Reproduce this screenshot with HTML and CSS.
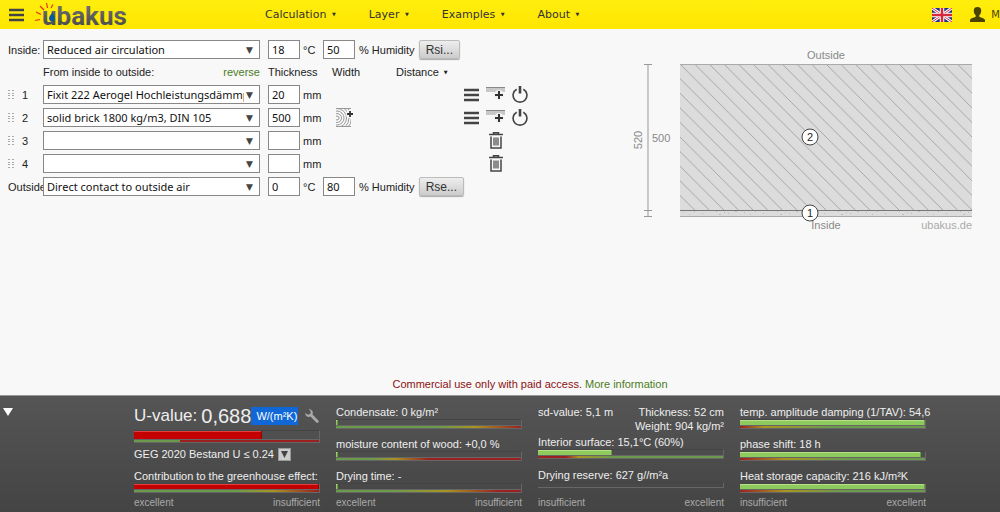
FILE: index.html
```html
<!DOCTYPE html>
<html lang="en">
<head>
<meta charset="utf-8">
<title>ubakus</title>
<link rel="stylesheet" href="styles.css">
</head>
<body>
<svg width="0" height="0" class="sprite" aria-hidden="true">
  <symbol id="grip" viewBox="0 0 6 9"><path fill="#aaa" d="M0 0h2v1H0zM4 0h2v1H4zM0 3h2v1H0zM4 3h2v1H4zM0 5h2v1H0zM4 5h2v1H4zM0 8h2v1H0zM4 8h2v1H4z"/></symbol>
  <symbol id="bars" viewBox="0 0 15 14"><path stroke="#444" stroke-width="2.400" d="M0 2h15M0 7h15M0 12h15"/></symbol>
  <symbol id="insert" viewBox="0 0 19 16"><path fill="#c8c8c8" d="M0 1h19v4H0z"/><path fill="#888" d="M0 0h19v1H0z"/><circle cx="13" cy="8" r="5" fill="#f2f2f2"/><path stroke="#333" stroke-width="2" d="M9 8h8M13 4v8"/></symbol>
  <symbol id="power" viewBox="0 0 16 17"><path fill="none" stroke="#444" stroke-width="1.600" d="M4.700 3.200A6.900 6.900 0 1 0 11.300 3.200"/><path stroke="#444" stroke-width="2.600" d="M8 0v7.500"/></symbol>
  <symbol id="trash" viewBox="0 0 14 17"><path fill="none" stroke="#444" stroke-width="1.500" d="M0 2.600h14M4.500 2V.8h5V2M2 4.500v11.500h10V4.500"/><path stroke="#444" stroke-width="1.200" d="M5 5.500v8M7 5.500v8M9 5.500v8"/></symbol>
</svg>

<header class="topbar">
  <button class="burger" aria-label="Menu"><svg width="15" height="14"><use href="#bars"/></svg></button>
  <a class="logo" href="#" aria-label="ubakus">
    <svg width="96" height="28" viewBox="0 0 96 28">
      <defs><linearGradient id="ink" x1="0" y1="0" x2="0" y2="1"><stop offset="0" stop-color="#777"/><stop offset="1" stop-color="#444"/></linearGradient></defs>
      <text class="wordmark" x="7" y="24" fill="url(#ink)">ubakus</text>
      <path d="M0 19.500l5-1M1 11l5 2.500M5 5l4 4M11.500 2l1 5M18 3.500l-2 3.500" stroke="#e2331a" stroke-width="1.200" fill="none"/>
      <path d="M18 11c-2.500 3-4.500 5-3.800 7.500.8 2.500 5 2.500 5.600 0 .5-2-1.800-4-1.800-7.500z" fill="#0b55a8"/>
    </svg>
  </a>
  <nav class="menu">
    <a href="#">Calculation <i>▼</i></a>
    <a href="#">Layer <i>▼</i></a>
    <a href="#">Examples <i>▼</i></a>
    <a href="#">About <i>▼</i></a>
  </nav>
  <a class="flag" href="#" aria-label="Language: English"><svg width="20" height="14" viewBox="0 0 20 14">
    <path fill="#26337c" d="M0 0h20v14H0z"/><path stroke="#fff" stroke-width="3" d="M0 0l20 14M20 0L0 14"/><path stroke="#d5283b" stroke-width="1" d="M0 0l20 14M20 0L0 14"/><path stroke="#fff" stroke-width="4.500" d="M10 0v14M0 7h20"/><path stroke="#d5283b" stroke-width="2.500" d="M10 0v14M0 7h20"/></svg></a>
  <a class="account" href="#" aria-label="My account"><svg width="15" height="15" viewBox="0 0 15 15"><path fill="#4a4300" d="M7.500 0C10 0 11.500 1.600 11.200 4.200 11 6 10.300 7.400 9.300 8.300v1.500c1.500 1.100 5.700 1.200 5.700 3.700V15H0v-1.500c0-2.500 4.200-2.600 5.700-3.700V8.300C4.700 7.400 4 6 3.800 4.200 3.500 1.600 5 0 7.500 0z"/></svg><span>M</span></a>
</header>

<main class="work">
  <form class="layers">
    <div class="row climate">
      <label for="in-air">Inside:</label>
      <span class="pick"><select id="in-air"><option>Reduced air circulation</option></select></span>
      <span class="field"><input id="in-t" value="18" aria-label="Inside temperature"><label for="in-t">°C</label></span>
      <span class="humidity"><input id="in-h" value="50"><label for="in-h">% Humidity</label><button type="button" class="res">Rsi...</button></span>
    </div>
    <div class="row heads">
      <span></span>
      <span class="order"><span>From inside to outside:</span><a href="#">reverse</a></span>
      <span>Thickness</span>
      <span class="indent">Width</span>
      <span>Distance <i>▼</i></span>
    </div>
    <div class="row">
      <label class="num" for="l1"><svg width="6" height="9"><use href="#grip"/></svg>1</label>
      <span class="pick"><select id="l1"><option>Fixit 222 Aerogel Hochleistungsdämmputz</option></select></span>
      <span class="field"><input id="d1" value="20"><label for="d1">mm</label></span>
      <span></span><span></span>
      <span class="tools"><button type="button" aria-label="Options"><svg width="15" height="14"><use href="#bars"/></svg></button><button type="button" aria-label="Insert layer"><svg width="19" height="16"><use href="#insert"/></svg></button><button type="button" aria-label="Disable layer"><svg width="16" height="17"><use href="#power"/></svg></button></span>
    </div>
    <div class="row">
      <label class="num" for="l2"><svg width="6" height="9"><use href="#grip"/></svg>2</label>
      <span class="pick"><select id="l2"><option>solid brick 1800 kg/m3, DIN 105</option></select></span>
      <span class="field"><input id="d2" value="500"><label for="d2">mm</label></span>
      <span class="beam"><button type="button" aria-label="Add beams"><svg width="18" height="19" viewBox="0 0 18 19">
        <clipPath id="wood"><path d="M0 0h15v19H0z"/></clipPath>
        <g clip-path="url(#wood)" fill="none" stroke="#999" stroke-width="1"><circle cx="1" cy="10" r="2"/><circle cx="1" cy="10" r="4.500"/><circle cx="1" cy="10" r="7"/><circle cx="1" cy="10" r="9.500"/><circle cx="1" cy="10" r="12"/><circle cx="1" cy="10" r="14.500"/><circle cx="1" cy="10" r="17"/><path d="M0 .5h15M0 18.500h15"/></g>
        <circle cx="14" cy="6" r="4" fill="#f8f8f8"/>
        <path stroke="#333" stroke-width="1.800" d="M11 6h6M14 3v6"/></svg></button></span>
      <span></span>
      <span class="tools"><button type="button" aria-label="Options"><svg width="15" height="14"><use href="#bars"/></svg></button><button type="button" aria-label="Insert layer"><svg width="19" height="16"><use href="#insert"/></svg></button><button type="button" aria-label="Disable layer"><svg width="16" height="17"><use href="#power"/></svg></button></span>
    </div>
    <div class="row">
      <label class="num" for="l3"><svg width="6" height="9"><use href="#grip"/></svg>3</label>
      <span class="pick"><select id="l3"><option></option></select></span>
      <span class="field"><input id="d3"><label for="d3">mm</label></span>
      <span></span><span></span>
      <span class="tools single"><button type="button" aria-label="Delete layer"><svg width="14" height="17"><use href="#trash"/></svg></button></span>
    </div>
    <div class="row">
      <label class="num" for="l4"><svg width="6" height="9"><use href="#grip"/></svg>4</label>
      <span class="pick"><select id="l4"><option></option></select></span>
      <span class="field"><input id="d4"><label for="d4">mm</label></span>
      <span></span><span></span>
      <span class="tools single"><button type="button" aria-label="Delete layer"><svg width="14" height="17"><use href="#trash"/></svg></button></span>
    </div>
    <div class="row climate">
      <label for="out-air">Outside</label>
      <span class="pick"><select id="out-air"><option>Direct contact to outside air</option></select></span>
      <span class="field"><input id="out-t" value="0"><label for="out-t">°C</label></span>
      <span class="humidity"><input id="out-h" value="80"><label for="out-h">% Humidity</label><button type="button" class="res">Rse...</button></span>
    </div>
  </form>

  <svg class="section" viewBox="0 0 350 190" width="350" height="190" role="img" aria-label="Cross section">
    <defs>
      <pattern id="hatch" width="14.600" height="14.600" patternUnits="userSpaceOnUse" x="55" y="19"><path d="M-1-1L15.600 15.600" stroke="#999" stroke-width=".8"/></pattern>
      <pattern id="plaster" width="61" height="6" patternUnits="userSpaceOnUse" x="55" y="165"><path fill="#bbb" d="M3 2h1v1H3zM9 4h1v1H9zM14 1h1v1h-1zM22 3h1v1h-1zM36 1h1v1h-1zM39 4h2v1h-2zM44 2h1v1h-1zM48 3h1v1h-1zM55 1h2v1h-2z"/></pattern>
    </defs>
    <path fill="#dcdcdc" d="M55 19h292v152H55z"/>
    <path fill="url(#hatch)" d="M55 19h292v146H55z"/>
    <path fill="url(#plaster)" d="M55 166h292v5H55z"/>
    <path d="M55 19.500h292M55 171.500h292" stroke="#aaa"/>
    <path d="M55 165.500h292" stroke="#777"/>
    <path d="M23 19v152M19 19.500h8M19 165.500h8M19 171.500h8" stroke="#999" fill="none"/>
    <g class="dims">
      <text x="201" y="14" text-anchor="middle">Outside</text>
      <text x="201" y="184" text-anchor="middle">Inside</text>
      <text class="brand" x="347" y="184" text-anchor="end">ubakus.de</text>
      <text x="27" y="97">500</text>
      <text transform="translate(17 95) rotate(-90)" text-anchor="middle">520</text>
    </g>
    <g class="pins">
      <circle cx="185" cy="92" r="8"/><text x="185" y="96">2</text>
      <circle cx="185" cy="168" r="8"/><text x="185" y="172">1</text>
    </g>
  </svg>
</main>

<p class="notice">Commercial use only with paid access. <a href="#">More information</a></p>

<footer class="results">
  <button class="fold" aria-label="Collapse results"><svg width="10" height="8"><path fill="#fff" d="M0 0h10L5 8z"/></svg></button>
  <section class="col">
    <div class="uvalue"><span class="cap">U-value:</span><output>0,688</output><mark>W/(m²K)</mark>
      <button aria-label="Settings"><svg width="14" height="14" viewBox="0 0 14 14"><path fill="#aaa" d="M3.800.3L5.600 2v2.500L4 5.600 2 5.500.3 3.800C0 6 1.500 8 3.500 8c.8 0 1.500-.1 2-.4l5.800 5.800c.6.600 1.400.600 2 0s.600-1.400 0-2L7.500 5.600C8.600 3 7 .2 3.800.3z"/></svg></button></div>
    <div class="gauge tall"><div class="fill red" style="width:69%"></div><div class="scale s-limit"></div></div>
    <div class="norm">GEG 2020 Bestand U ≤ 0.24 <button aria-label="Choose standard"><svg width="7" height="7"><path fill="#444" d="M0 0h7L3.500 7z"/></svg></button></div>
    <div class="metric last"><div>Contribution to the greenhouse effect:</div><div class="gauge"><div class="fill red" style="width:100%"></div><div class="scale s-late"></div></div></div>
    <div class="ends"><span>excellent</span><span>insufficient</span></div>
  </section>
  <section class="col">
    <div class="metric"><div>Condensate: 0 kg/m²</div><div class="gauge"><div class="fill" style="width:1%"></div><div class="scale s-late"></div></div></div>
    <div class="metric"><div>moisture content of wood: +0,0 %</div><div class="gauge"><div class="fill" style="width:1%"></div><div class="scale s-early"></div></div></div>
    <div class="metric last"><div>Drying time: -</div><div class="gauge"><div class="fill" style="width:1%"></div><div class="scale s-mid"></div></div></div>
    <div class="ends"><span>excellent</span><span>insufficient</span></div>
  </section>
  <section class="col">
    <div class="facts"><span>sd-value: 5,1 m</span><span class="right">Thickness: 52 cm<br>Weight: 904 kg/m²</span></div>
    <div class="metric"><div>Interior surface: 15,1°C (60%)</div><div class="gauge"><div class="fill" style="width:40%"></div><div class="scale s-surface"></div></div></div>
    <div class="metric last"><div>Drying reserve: 627 g//m²a</div><div class="gauge plain"></div></div>
    <div class="ends"><span>insufficient</span><span>excellent</span></div>
  </section>
  <section class="col">
    <div class="metric"><div>temp. amplitude damping (1/TAV): 54,6</div><div class="gauge"><div class="fill" style="width:100%"></div><div class="scale s-rise"></div></div></div>
    <div class="metric"><div>phase shift: 18 h</div><div class="gauge"><div class="fill" style="width:98%"></div><div class="scale s-rise2"></div></div></div>
    <div class="metric last"><div>Heat storage capacity: 216 kJ/m²K</div><div class="gauge"><div class="fill" style="width:100%"></div><div class="scale s-rise2"></div></div></div>
    <div class="ends"><span>insufficient</span><span>excellent</span></div>
  </section>
</footer>
</body>
</html>
```
FILE: styles.css
```css
* { box-sizing: border-box; }
body {
  margin: 0;
  min-height: 100vh;
  display: flex;
  flex-direction: column;
  overflow-x: hidden;
  background: #f8f8f8;
  color: #222;
  font: 11px/14px "Liberation Sans", Arial, sans-serif;
}
a { color: #4a7d1c; text-decoration: none; }
button { padding: 0; border: 0; background: none; font: inherit; color: inherit; }
svg { display: block; flex: none; }
i { margin-left: 2px; font: 5px/8px "DejaVu Sans", sans-serif; vertical-align: 2px; }
.sprite { position: absolute; }

.topbar {
  display: flex;
  align-items: center;
  height: 29px;
  padding-left: 9px;
  background: linear-gradient(#ffee0d, #ffe600);
}
.logo { margin-left: 11px; }
.logo svg { overflow: visible; }
.wordmark { font: bold 26px Roboto, sans-serif; }
.menu { display: flex; flex: 1; gap: 33px; margin-left: 134px; padding-top: 1px; font: 11px/14px "DejaVu Sans", sans-serif; }
.menu a { color: #333; white-space: nowrap; }
.account { display: flex; align-items: center; gap: 6px; margin-left: 18px; color: #4a4300; font: 10px/14px "DejaVu Sans", sans-serif; }

.work { display: flex; flex: 1; align-items: flex-start; padding: 11px 25px 0 8px; }
.layers { display: flex; flex-direction: column; flex: 1; gap: 4px; }
.row { display: grid; grid-template-columns: 27px 217px 47px 65px 60px 1fr; column-gap: 8px; align-items: center; height: 19px; white-space: nowrap; }
.heads { height: 18px; }
.order { display: flex; justify-content: space-between; }
.indent { padding-left: 9px; }
.beam { display: flex; padding-left: 13px; }
.num { display: flex; align-items: center; gap: 8px; }
.pick { position: relative; }
.pick::after { content: "▼"; position: absolute; right: 7px; top: 3px; font: 9px/14px "DejaVu Sans", sans-serif; color: #444; pointer-events: none; }
select, input {
  display: block;
  height: 19px;
  padding: 0 3px;
  border: 1px solid #888;
  border-radius: 0;
  background: #fff;
  color: #111;
  font: 11px/17px "Noto Sans", sans-serif;
}
select { width: 100%; padding-right: 15px; appearance: none; overflow: hidden; }
input { width: 32px; }
.field { display: flex; align-items: center; gap: 3px; }
.humidity { display: flex; align-items: center; grid-column: 4 / -1; gap: 4px; }
.res { height: 19px; padding: 0 6px; border: 1px solid #bbb; border-radius: 2px; background: linear-gradient(#eee, #ccc); box-shadow: 0 1px 1px #aaa; font-size: 12px; color: #333; }
.tools { display: flex; align-items: center; gap: 7px; }
.single { padding-left: 25px; }
.section { margin-top: 5px; }
.dims { fill: #888; font-size: 11px; }
.brand { fill: #aaa; }
.pins circle { fill: #fff; stroke: #444; }
.pins text { fill: #222; font-size: 11px; text-anchor: middle; }

.notice { margin: 0; padding: 0 0 4px 60px; text-align: center; color: #8c1010; }

.results {
  display: grid;
  grid-template-columns: 110px repeat(4, minmax(0, 186px));
  column-gap: 16px;
  padding: 9px 8px 2px;
  border-top: 1px solid #999;
  background: linear-gradient(#555, #444);
  color: #eee;
  white-space: nowrap;
}
.fold { align-self: start; width: 10px; margin: 3px 0 0 -5px; }
.col { display: flex; flex-direction: column; }
.metric { margin-bottom: 8px; }
.metric.last { margin: auto 0 3px; }
.gauge { height: 10px; border: 1px solid #666; border-left: 0; border-top-color: #444; }
.fill { height: 5px; background: #8fca5c; border-right: 1px solid #6a9c40; box-shadow: inset 0 1px #b5e08c; }
.red { background: #c40000; border-color: #900; box-shadow: inset 0 1px #e04040; }
.scale { height: 3px; border-top: 1px solid #666; }
.tall { height: 13px; }
.tall .fill { height: 8px; }
.plain { height: 6px; margin-bottom: 5px; }
.s-limit { background: linear-gradient(90deg, #6c9a4c 25%, #9c2020 25%); }
.s-late { background: linear-gradient(90deg, #6c9a4c 55%, #a89420 75%, #9c2020); }
.s-early { background: linear-gradient(90deg, #6c9a4c 20%, #a89420 32%, #9c2020 50%); }
.s-mid { background: linear-gradient(90deg, #6c9a4c 30%, #a89420 60%, #9c2020 88%); }
.s-surface { background: linear-gradient(90deg, #9c2020 15%, #a89420 22%, #6c9a4c 40%); }
.s-rise { background: linear-gradient(90deg, #9c2020, #a89420 13%, #6c9a4c 50%); }
.s-rise2 { background: linear-gradient(90deg, #9c2020, #a89420 24%, #6c9a4c 55%); }
.ends { display: flex; justify-content: space-between; color: #aaa; font-size: 10px; }
.facts { display: flex; justify-content: space-between; margin-bottom: 2px; }
.right { text-align: right; }
.uvalue { display: flex; align-items: center; height: 21px; margin-bottom: 4px; }
.cap { font-size: 17px; }
output { margin-left: 4px; font-size: 20px; }
mark { padding: 2px 1px 2px 5px; background: #1068d8; color: #fff; }
.uvalue button { margin-left: 7px; }
.norm { display: flex; align-items: center; gap: 4px; margin-top: 4px; }
.norm button { display: flex; align-items: center; justify-content: center; width: 13px; height: 13px; background: #ccc; border: 1px solid #999; }
```
